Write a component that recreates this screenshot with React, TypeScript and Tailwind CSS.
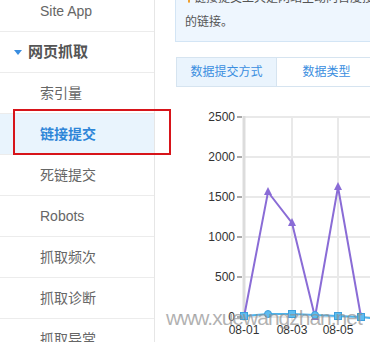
import React from "react";

const cjk = "font-['Liberation_Sans','Noto_Sans_CJK_SC',sans-serif]";

function SideRow({ children, active, className = "" }: { children: React.ReactNode; active?: boolean; className?: string }) {
  return (
    <div
      className={`h-[41px] shrink-0 border-b border-[#ececec] flex items-center text-[14px] ${
        active ? "bg-[#e9f4fd] text-[#2f86d8] font-bold" : "text-[#666]"
      } ${className}`}
    >
      {children}
    </div>
  );
}

function Chart() {
  const xs = [69, 93, 117, 140, 163, 186];
  const purple = [217, 92, 123, 217, 87, 217];
  const blue = [216, 214, 214, 215, 216, 217];
  const grid = [17, 57, 97, 137, 177, 217];
  const labels = ["2500", "2000", "1500", "1000", "500", "0"];
  const pPts = xs.map((x, i) => `${x},${purple[i]}`).join(" ");
  const bPts = xs.map((x, i) => `${x},${blue[i]}`).join(" ") + " 196,218";
  return (
    <svg width="195" height="242" viewBox="0 0 195 242" className="block">
      {grid.map((y) => (
        <line key={y} x1="69" x2="195" y1={y} y2={y} stroke="#e9e9e9" strokeWidth="2" />
      ))}
      {[117, 163].map((x) => (
        <line key={x} x1={x} x2={x} y1="17" y2="221" stroke="#e9e9e9" strokeWidth="2" />
      ))}
      <line x1="69" x2="69" y1="16" y2="221" stroke="#dcdcdc" strokeWidth="3" />
      {grid.map((y, i) => (
        <g key={i}>
          <line x1="62" x2="67" y1={y} y2={y} stroke="#555" strokeWidth="1" />
          <text x="60" y={y + 4} textAnchor="end" fontSize="12" fill="#333" fontFamily="Liberation Sans, Arial, sans-serif">
            {labels[i]}
          </text>
        </g>
      ))}
      {[69, 117, 163].map((x, i) => (
        <text key={x} x={x} y="234" textAnchor="middle" fontSize="12" fill="#333" fontFamily="Liberation Sans, Arial, sans-serif">
          {["08-01", "08-03", "08-05"][i]}
        </text>
      ))}
      <polyline points={pPts} fill="none" stroke="#8a6cd6" strokeWidth="2" />
      {xs.map((x, i) => (
        <polygon key={i} points={`${x},${purple[i] - 5} ${x - 4},${purple[i] + 3} ${x + 4},${purple[i] + 3}`} fill="#8a6cd6" />
      ))}
      <polyline points={bPts} fill="none" stroke="#4fb2ea" strokeWidth="2" />
      {xs.map((x, i) =>
        i === 1 || i === 3 ? (
          <circle key={i} cx={x} cy={blue[i]} r="3.5" fill="#5cbcf0" stroke="#3d9fdc" strokeWidth="1" />
        ) : (
          <rect key={i} x={x - 3.5} y={blue[i] - 3.5} width="7" height="7" fill="#5cbcf0" stroke="#3d9fdc" strokeWidth="1" />
        )
      )}
    </svg>
  );
}

export default function App() {
  return (
    <div className={`relative w-[370px] h-[342px] overflow-hidden bg-white flex items-start ${cjk}`}>
      <aside className="w-[155px] shrink-0 border-r border-[#e6e6e6] -mt-[9px] flex flex-col">
        <SideRow className="pl-[40px]">Site App</SideRow>
        <SideRow className="pl-[14px] !text-[#555] !font-bold text-[15px]">
          <span className="w-0 h-0 border-l-[4px] border-r-[4px] border-t-[5px] border-l-transparent border-r-transparent border-t-[#3a8ee0] mr-[6px]" />
          网页抓取
        </SideRow>
        <SideRow className="pl-[40px]">索引量</SideRow>
        <SideRow active className="pl-[40px]">链接提交</SideRow>
        <SideRow className="pl-[40px]">死链提交</SideRow>
        <SideRow className="pl-[40px]">Robots</SideRow>
        <SideRow className="pl-[40px]">抓取频次</SideRow>
        <SideRow className="pl-[40px]">抓取诊断</SideRow>
        <SideRow className="pl-[40px]">抓取异常</SideRow>
      </aside>
      <main className="flex-1 pl-[20px] flex flex-col min-w-0">
        <div className="-mt-[21px] bg-[#eef6fe] border border-[#d3e5f5] pl-[9px] pt-[6px] pb-[7px] text-[12px] leading-[24px] text-[#555] whitespace-nowrap w-[220px] overflow-hidden">
          <div className="flex items-center">
            <span className="inline-block w-[9px] h-[9px] rounded-full border border-[#f0a030] bg-[#fde6b8] ml-[3px] mr-[4px]" />
            <span>链接提交工具是网站主动向百度搜索推送</span>
          </div>
          <div>的链接。</div>
        </div>
        <div className="mt-[15px] flex h-[30px] text-[12px] text-[#3a8ee0] ml-[1px]">
          <div className="w-[101px] shrink-0 bg-[#eaf4fd] border border-[#d6e4f0] flex items-center justify-center">数据提交方式</div>
          <div className="w-[100px] shrink-0 bg-white border border-l-0 border-[#d6e4f0] flex items-center justify-center">数据类型</div>
        </div>
        <div className="mt-[13px]">
          <Chart />
        </div>
      </main>
      <div className="absolute left-[13px] top-[109px] w-[158px] h-[46px] border-2 border-[#d7141a]" />
      <div className="absolute left-[166px] top-[302px] text-[21px] tracking-[-1px] text-[#8f8f8f]/70 font-['Liberation_Sans',sans-serif] whitespace-nowrap">
        www.xuewangzhan.net
      </div>
    </div>
  );
}
